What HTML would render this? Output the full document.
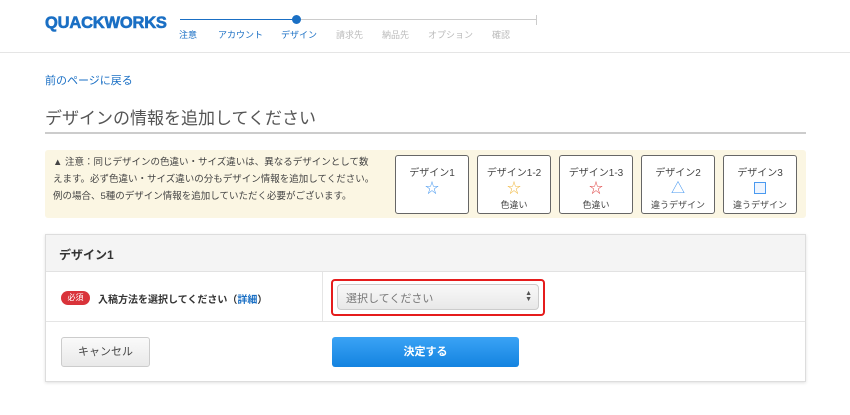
<!DOCTYPE html>
<html><head><meta charset="utf-8"><style>
*{margin:0;padding:0;box-sizing:border-box}
body{width:850px;height:415px;background:#fff;font-family:"Liberation Sans","Noto Sans CJK JP",sans-serif;position:relative;overflow:hidden;color:#333}
.a{position:absolute}
.lbl{position:absolute;top:28px;font-size:9px;color:#bbb}
.db{position:absolute;top:155px;width:74px;height:59px;border:1px solid #666;border-radius:3px;background:#fff;text-align:center;font-size:10px;color:#444}
.db .t{margin-top:8px}
.db .i{font-size:14px;line-height:17px;margin-top:1px}
.db .s{font-size:9px;margin-top:1px}
</style></head><body>
<div class="a" style="left:45px;top:14px;font-size:16.5px;font-weight:bold;color:#1a6fc4;letter-spacing:-0.2px;-webkit-text-stroke:0.6px #1a6fc4">QUACKWORKS</div>
<div class="a" style="left:180px;top:19px;width:357px;height:1px;background:#ccc"></div>
<div class="a" style="left:180px;top:19px;width:116px;height:1px;background:#1a6fc4"></div>
<div class="a" style="left:292px;top:15px;width:9px;height:9px;border-radius:50%;background:#1a6fc4"></div>
<div class="a" style="left:536px;top:15px;width:1px;height:10px;background:#ccc"></div>
<div class="lbl" style="left:179px;color:#1a6fc4">注意</div>
<div class="lbl" style="left:218px;color:#1a6fc4">アカウント</div>
<div class="lbl" style="left:281px;color:#1a6fc4">デザイン</div>
<div class="lbl" style="left:336px">請求先</div>
<div class="lbl" style="left:382px">納品先</div>
<div class="lbl" style="left:428px">オプション</div>
<div class="lbl" style="left:492px">確認</div>
<div class="a" style="left:0;top:52px;width:850px;height:1px;background:#e5e5e5"></div>
<div class="a" style="left:45px;top:72px;font-size:11px;color:#1a6fc4">前のページに戻る</div>
<div class="a" style="left:45px;top:104px;font-size:17px;color:#555">デザインの情報を追加してください</div>
<div class="a" style="left:45px;top:132px;width:761px;height:2px;background:#ccc"></div>
<div class="a" style="left:45px;top:150px;width:761px;height:68px;background:#fbf6e3;border-radius:3px"></div>
<div class="a" style="left:53px;top:154px;font-size:9.5px;line-height:17px;color:#444;white-space:nowrap">▲ 注意：同じデザインの色違い・サイズ違いは、異なるデザインとして数<br>えます。必ず色違い・サイズ違いの分もデザイン情報を追加してください。<br>例の場合、5種のデザイン情報を追加していただく必要がございます。</div>
<div class="db" style="left:395px"><div class="t">デザイン1</div><div class="i" style="color:#4a9af0">☆</div></div>
<div class="db" style="left:477px"><div class="t">デザイン1-2</div><div class="i" style="color:#f0b840">☆</div><div class="s">色違い</div></div>
<div class="db" style="left:559px"><div class="t">デザイン1-3</div><div class="i" style="color:#e04848">☆</div><div class="s">色違い</div></div>
<div class="db" style="left:641px"><div class="t">デザイン2</div><div class="i" style="color:#4a9af0">△</div><div class="s">違うデザイン</div></div>
<div class="db" style="left:723px"><div class="t">デザイン3</div><div class="i"><span style="display:inline-block;width:12px;height:12px;border:1.5px solid #4a9af0;background:#eef5ff;vertical-align:-1px"></span></div><div class="s">違うデザイン</div></div>
<div class="a" style="left:45px;top:234px;width:761px;height:148px;border:1px solid #ddd;box-shadow:0 1px 3px rgba(0,0,0,.12);background:#fff"></div>
<div class="a" style="left:46px;top:235px;width:759px;height:37px;background:#f4f4f4;border-bottom:1px solid #e2e2e2"></div>
<div class="a" style="left:59px;top:246px;font-size:12px;font-weight:bold;color:#333">デザイン1</div>
<div class="a" style="left:46px;top:321px;width:759px;height:1px;background:#e5e5e5"></div>
<div class="a" style="left:322px;top:272px;width:1px;height:49px;background:#e5e5e5"></div>
<div class="a" style="left:61px;top:291px;width:29px;height:14px;border-radius:7px;background:#d9333a;color:#fff;font-size:8px;text-align:center;line-height:14px">必須</div>
<div class="a" style="left:98px;top:291px;font-size:10px;font-weight:bold;color:#333">入稿方法を選択してください（<span style="color:#1a6fc4">詳細</span>）</div>
<div class="a" style="left:331px;top:279px;width:214px;height:37px;border:2px solid #e51c1c;border-radius:4px"></div>
<div class="a" style="left:337px;top:284px;width:202px;height:26px;border:1px solid #ccc;border-radius:4px;background:linear-gradient(#f8f8f8,#e8e8e8);font-size:11px;color:#777;padding:5px 0 0 8px">選択してください<span style="position:absolute;right:6px;top:6px;font-size:7px;line-height:6px;color:#555">▲<br>▼</span></div>
<div class="a" style="left:61px;top:337px;width:89px;height:30px;border:1px solid #ccc;border-radius:3px;background:linear-gradient(#fafafa,#e9e9e9);font-size:11px;color:#444;text-align:center;line-height:28px">キャンセル</div>
<div class="a" style="left:332px;top:337px;width:187px;height:30px;border-radius:3px;background:linear-gradient(#3aa3f5,#1483e0);font-size:11px;color:#fff;text-align:center;line-height:30px;font-weight:bold">決定する</div>
</body></html>
